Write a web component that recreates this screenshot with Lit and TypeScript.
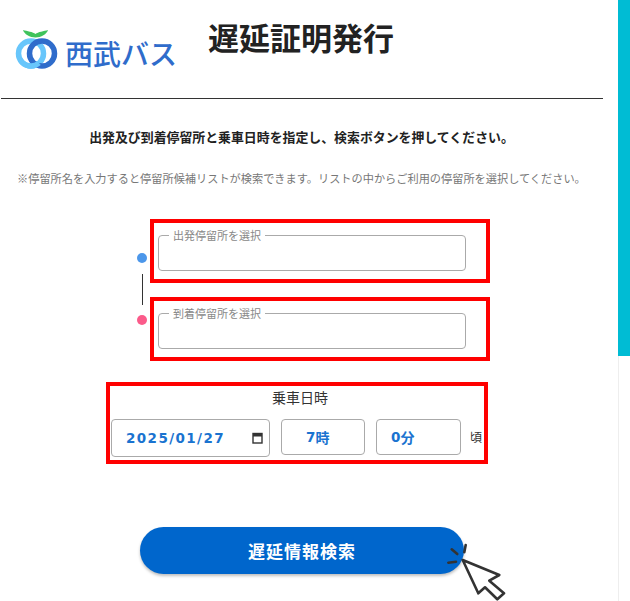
import { LitElement, html, css } from "lit";
import { customElement } from "lit/decorators.js";

@customElement("app-root")
export class AppRoot extends LitElement {
  static styles = css`
    :host {
      display: block;
      width: 630px;
      height: 601px;
      overflow: hidden;
      background: #fff;
      font-family: "Noto Sans CJK JP", "Noto Sans", sans-serif;
      color: #333;
      position: relative;
    }
    .page { display: flex; height: 601px; }
    .main { width: 618px; flex: none; }
    .track { width: 12px; flex: none; border-left: 1px solid #eee; box-sizing: border-box; position: relative; }
    .thumb { position: absolute; left: -1px; top: 0; width: 12px; height: 356px; background: #00bcd4; }
    .header {
      width: 602px; margin-left: 1px; box-sizing: border-box;
      border-bottom: 1px solid #333; display: flex; align-items: flex-start;
      height: 99px;
    }
    .logo { display: flex; align-items: center; margin: 28px 0 0 14px; width: 193px; height: 42px; }
    .logo svg { flex: none; }
    .logo span {
      font-size: 28px; line-height: 32px; font-weight: 500; color: #2f6ccb; white-space: nowrap; margin-top: 7px;
    }
    h1 { margin: 15px 0 0 0; font-size: 31px; line-height: 44px; font-weight: 700; color: #222; white-space: nowrap; }
    .lead { margin: 28px 0 0; text-align: center; font-size: 12.9px; line-height: 20px; font-weight: 700; color: #222; width: 603px; }
    .note { margin: 21px 0 0 17px; font-size: 11.2px; line-height: 20px; color: #777; white-space: nowrap; }
    .route { display: flex; align-items: center; margin: 31px 0 0 137px; }
    .rail { width: 10px; display: flex; flex-direction: column; align-items: center; margin-right: 3px; margin-top: -2px; }
    .dot { width: 10px; height: 10px; border-radius: 50%; }
    .dot.a { background: #4c97ea; }
    .dot.b { background: #fb5b8a; }
    .line { width: 1px; height: 31px; margin: 11px 0 10px; background: #333; }
    .stops { display: flex; flex-direction: column; gap: 14px; }
    .red { border: 4px solid #f00; box-sizing: border-box; }
    .stop { width: 340px; height: 64px; padding: 6px 0 0 4px; }
    fieldset {
      margin: 0; padding: 0 0 0 10px; width: 308px; height: 42px; box-sizing: border-box;
      border: 1px solid #aaa; border-radius: 4px;
    }
    legend { font-size: 11px; line-height: 13px; color: #888; padding: 0 4px; }
    .when {
      width: 382px; height: 82px; margin: 21px 0 0 106px; padding: 1px 1px 0 1px;
      display: flex; flex-direction: column;
    }
    .when .ttl { text-align: center; font-size: 14px; line-height: 20px; color: #333; margin-left: 6px; }
    .fields { display: flex; align-items: flex-start; margin-top: 12px; }
    .field {
      box-sizing: border-box; border: 1px solid #aaa; border-radius: 4px; height: 36px;
      display: flex; align-items: center; color: #1a73d0; font-weight: 700; font-size: 14px;
    }
    .date {
      width: 159px; height: 38px; font-family: "DejaVu Sans", sans-serif; font-size: 13.5px; letter-spacing: 1.4px;
      padding: 0 6px 0 14px; justify-content: space-between; margin-right: 11px;
    }
    .date svg { flex: none; }
    .hour { width: 84px; margin-right: 11px; padding-left: 24px; }
    .min { width: 85px; padding-left: 14px; margin-right: 10px; }
    .num { font-family: "DejaVu Sans", sans-serif; font-size: 13.5px; }
    .hour, .min { padding-bottom: 1px; }
    .koro { font-size: 12px; line-height: 16px; margin-top: 10px; margin-left: -1px; color: #333; }
    .btnrow { margin: 63px 0 0 140px; }
    button {
      display: block; width: 324px; height: 47px; border: 0; border-radius: 24px; background: #0066cc; color: #fff;
      font-family: inherit; font-size: 17px; font-weight: 700; letter-spacing: 1px; padding: 0;
      box-shadow: 0 2px 3px rgba(0,0,0,.25);
    }
    .cursor { position: absolute; left: 440px; top: 540px; }
  `;

  render() {
    return html`
      <div class="page">
        <div class="main">
          <div class="header">
            <div class="logo">
              <svg width="50" height="42" viewBox="0 0 50 42" fill="none">
                <path d="M8 2 C12 3 18 4 20.5 6 C23 4 29 3 33 2 C32 6 26 9.5 20.5 9.5 C15 9.5 9 6 8 2 Z" fill="#3fc35c"/>
                <circle cx="16" cy="25.5" r="12.5" stroke="#68c6fb" stroke-width="5.5"/>
                <circle cx="27" cy="25.5" r="12.5" stroke="#2f6ccb" stroke-width="5.5"/>
                <path d="M5 31.5 A12.5 12.5 0 0 0 24 35" stroke="#68c6fb" stroke-width="5.5"/>
              </svg>
              <span>西武バス</span>
            </div>
            <h1>遅延証明発行</h1>
          </div>
          <p class="lead">出発及び到着停留所と乗車日時を指定し、検索ボタンを押してください。</p>
          <p class="note">※停留所名を入力すると停留所候補リストが検索できます。リストの中からご利用の停留所を選択してください。</p>
          <div class="route">
            <div class="rail">
              <div class="dot a"></div>
              <div class="line"></div>
              <div class="dot b"></div>
            </div>
            <div class="stops">
              <div class="red stop"><fieldset><legend>出発停留所を選択</legend></fieldset></div>
              <div class="red stop"><fieldset><legend>到着停留所を選択</legend></fieldset></div>
            </div>
          </div>
          <div class="red when">
            <div class="ttl">乗車日時</div>
            <div class="fields">
              <div class="field date"><span>2025/01/27</span>
                <svg width="11" height="12" viewBox="0 0 11 12" fill="none">
                  <rect x="1" y="1.5" width="9" height="9.5" stroke="#333" stroke-width="1.4"/>
                  <rect x="1" y="1.5" width="9" height="3" fill="#333"/>
                </svg>
              </div>
              <div class="field hour"><span class="num">7</span>時</div>
              <div class="field min"><span class="num">0</span>分</div>
              <div class="koro">頃</div>
            </div>
          </div>
          <div class="btnrow"><button>遅延情報検索</button></div>
        </div>
        <div class="track"><div class="thumb"></div></div>
      </div>
      <svg class="cursor" width="70" height="61" viewBox="0 0 70 61" fill="none">
        <path d="M22.7 20 L59.3 35 L49.3 40.7 L64 53.3 L57.3 59.3 L45 47.3 L38.3 53.3 Z" stroke="#333" stroke-width="2.6" stroke-linejoin="round" fill="#fff"/>
        <path d="M11.7 9.3 L17.3 14 M8.3 22.7 L16 21.7 M25.7 5 L24.3 12.3" stroke="#333" stroke-width="2.6" stroke-linecap="round"/>
      </svg>
    `;
  }
}
